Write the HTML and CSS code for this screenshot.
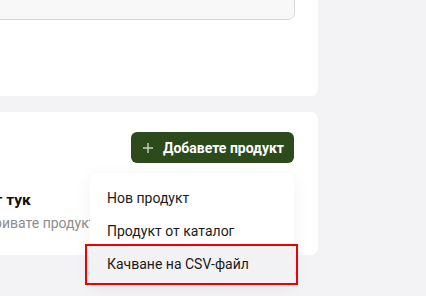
FILE: index.html
```html
<!DOCTYPE html>
<html lang="bg">
  <head>
    <meta name="viewport" content="width=device-width, initial-scale=1">
    <link rel="stylesheet" href="styles.css">
    <title>Продукти</title>
  </head>
  <body>
    <div class="page">
      <section class="card cardTop">
        <div class="searchBox"></div>
      </section>

      <section class="card cardProducts">
        <div class="toolbar">
          <div class="addMenu">
            <button class="addButton">
              <svg width="12" height="12" viewBox="0 0 12 12" aria-hidden="true">
                <path d="M6 1v10M1 6h10" stroke="#c9cfc4" stroke-width="1.4" fill="none"/>
              </svg>
              Добавете продукт
            </button>
            <ul class="dropdown">
              <li class="dropdownItem">Нов продукт</li>
              <li class="dropdownItem">Продукт от каталог</li>
              <li class="dropdownItem activeItem">Качване на CSV-файл</li>
            </ul>
          </div>
        </div>

        <div class="emptyState">
          <h2>Добавете първия си продукт тук</h2>
          <p>Започнете, като качвате или откривате продукти от каталога.</p>
        </div>
      </section>
    </div>
  </body>
</html>
```

FILE: styles.css
```css
body {
  margin: 0;
  min-height: 100vh;
  background-color: #f3f3f5;
  font-family: Roboto, "Noto Sans", sans-serif;
}

.page {
  width: 718px;
  margin-left: -400px;
  margin-top: -100px;
  display: flex;
  flex-direction: column;
  gap: 16px;
}

.card {
  background-color: #ffffff;
  border-radius: 7px;
  padding: 20px 24px;
}

.cardTop {
  height: 196px;
  box-sizing: border-box;
  padding-top: 60px;
}

.searchBox {
  height: 58px;
  margin-right: -1px;
  background-color: #f8f8f8;
  border: 1px solid #d8d8d8;
  border-radius: 7px;
}

.cardProducts {
  height: 143px;
  box-sizing: border-box;
}

.toolbar {
  display: flex;
  justify-content: flex-end;
}

.addMenu {
  position: relative;
}

.addButton {
  display: flex;
  align-items: center;
  gap: 9px;
  height: 31px;
  padding: 0 10px 0 11px;
  background-color: #2c4a1b;
  color: #ffffff;
  border: none;
  border-radius: 6px;
  font-family: inherit;
  font-size: 14px;
  font-weight: 700;
  cursor: pointer;
}

.emptyState {
  padding-left: 166px;
  margin-top: 28px;
}

.emptyState h2 {
  margin: 0;
  font-size: 15.5px;
  font-weight: 700;
  color: #111111;
  white-space: nowrap;
}

.emptyState p {
  margin: 6px 0 0 -9px;
  font-size: 14px;
  color: #8d8d8d;
  white-space: nowrap;
}

.dropdown {
  position: absolute;
  top: 41px;
  right: 0;
  z-index: 2;
  width: 204px;
  margin: 0;
  padding: 9px 0 0;
  list-style: none;
  background-color: #ffffff;
  border-radius: 8px;
  box-shadow: 0 4px 18px rgba(0, 0, 0, 0.06);
}

.dropdownItem {
  height: 33px;
  line-height: 33px;
  padding-left: 17px;
  font-size: 14px;
  color: #1a1a1a;
}

.activeItem {
  position: relative;
  height: 37px;
  line-height: 37px;
  margin-top: -2px;
  background-color: #f2f2f4;
}

.activeItem::after {
  content: "";
  position: absolute;
  inset: -2px -4px -2px -5px;
  border: 2px solid #e8000b;
}
```
